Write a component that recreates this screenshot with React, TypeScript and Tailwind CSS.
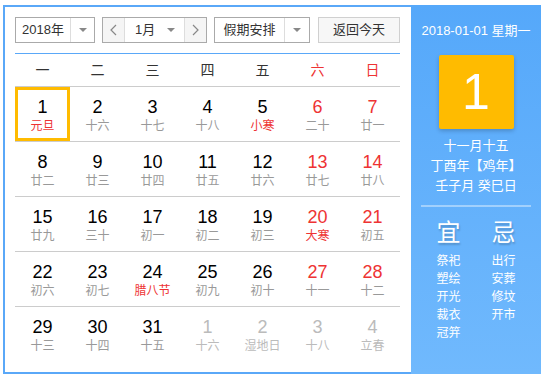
import React from 'react'

type Day = { n: number; l: string; red?: boolean; fest?: boolean; other?: boolean; sel?: boolean }

const weeks: Day[][] = [
  [
    { n: 1, l: '元旦', fest: true, sel: true },
    { n: 2, l: '十六' },
    { n: 3, l: '十七' },
    { n: 4, l: '十八' },
    { n: 5, l: '小寒', fest: true },
    { n: 6, l: '二十', red: true },
    { n: 7, l: '廿一', red: true },
  ],
  [
    { n: 8, l: '廿二' },
    { n: 9, l: '廿三' },
    { n: 10, l: '廿四' },
    { n: 11, l: '廿五' },
    { n: 12, l: '廿六' },
    { n: 13, l: '廿七', red: true },
    { n: 14, l: '廿八', red: true },
  ],
  [
    { n: 15, l: '廿九' },
    { n: 16, l: '三十' },
    { n: 17, l: '初一' },
    { n: 18, l: '初二' },
    { n: 19, l: '初三' },
    { n: 20, l: '大寒', red: true, fest: true },
    { n: 21, l: '初五', red: true },
  ],
  [
    { n: 22, l: '初六' },
    { n: 23, l: '初七' },
    { n: 24, l: '腊八节', fest: true },
    { n: 25, l: '初九' },
    { n: 26, l: '初十' },
    { n: 27, l: '十一', red: true },
    { n: 28, l: '十二', red: true },
  ],
  [
    { n: 29, l: '十三' },
    { n: 30, l: '十四' },
    { n: 31, l: '十五' },
    { n: 1, l: '十六', other: true },
    { n: 2, l: '湿地日', other: true },
    { n: 3, l: '十八', other: true },
    { n: 4, l: '立春', other: true },
  ],
]

const weekdays = ['一', '二', '三', '四', '五', '六', '日']
const yi = ['祭祀', '塑绘', '开光', '裁衣', '冠笄']
const ji = ['出行', '安葬', '修坟', '开市']

function Caret() {
  return <span className="block h-0 w-0 border-x-[4px] border-t-[4px] border-x-transparent border-t-[#888]" />
}

function Chevron({ dir }: { dir: 'l' | 'r' }) {
  return (
    <svg width="7" height="12" viewBox="0 0 7 12" className="text-[#888]">
      <polyline
        points={dir === 'l' ? '6,1 1,6 6,11' : '1,1 6,6 1,11'}
        fill="none"
        stroke="currentColor"
        strokeWidth="1.2"
      />
    </svg>
  )
}

export default function App() {
  return (
    <div
      className="ml-[3px] mt-[5px] flex h-[369px] w-[538px] text-[#333]"
      style={{ fontFamily: '"Liberation Sans", "Noto Sans CJK SC", sans-serif' }}
    >
      {/* calendar side */}
      <div className="flex w-[408px] flex-col border-y-2 border-l-2 border-[#5aa8f8] bg-white pl-[10px] pr-[11px] pt-[10px]">
        <div className="flex h-[26px] items-stretch text-[13px]">
          <div className="flex w-[80px] border border-[#aaa]">
            <div className="flex w-[55px] items-center justify-center border-r border-[#ddd]">2018年</div>
            <div className="flex flex-1 items-center justify-center"><Caret /></div>
          </div>
          <div className="ml-[7px] flex w-[105px] border border-[#aaa]">
            <div className="flex w-[22px] items-center justify-center border-r border-[#ddd] bg-[#f5f5f5]"><Chevron dir="l" /></div>
            <div className="flex w-[60px] items-center border-r border-[#ddd] pl-[10px]">
              <span>1月</span>
              <span className="ml-auto mr-[9px]"><Caret /></span>
            </div>
            <div className="flex flex-1 items-center justify-center bg-[#f5f5f5]"><Chevron dir="r" /></div>
          </div>
          <div className="ml-[7px] flex w-[96px] border border-[#aaa]">
            <div className="flex w-[70px] items-center justify-center border-r border-[#ddd]">假期安排</div>
            <div className="flex flex-1 items-center justify-center"><Caret /></div>
          </div>
          <div className="ml-[8px] flex w-[82px] items-center justify-center border border-[#d0d0d0] bg-[#f7f7f7]">返回今天</div>
        </div>

        <div className="mt-[10px] border-t border-[#5aa8f8]" />

        <div className="grid h-[33px] grid-cols-7 border-b border-[#ccc] text-[14px]">
          {weekdays.map((w, i) => (
            <div key={w} className={`flex items-center justify-center ${i > 4 ? 'text-[#e33]' : 'text-[#333]'}`}>
              {w}
            </div>
          ))}
        </div>

        {weeks.map((week, wi) => (
          <div key={wi} className={`grid h-[55px] grid-cols-7 ${wi < 4 ? 'border-b border-[#ccc]' : ''}`}>
            {week.map((d, di) => (
              <div
                key={di}
                className={`flex flex-col items-center pt-[10px] ${d.sel ? 'shadow-[inset_0_0_0_3px_#ffbb00]' : ''}`}
              >
                <span
                  className={`text-[18px] leading-[20px] ${
                    d.other ? 'text-[#bbb]' : d.red ? 'text-[#e33]' : 'text-black'
                  }`}
                >
                  {d.n}
                </span>
                <span
                  className={`text-[12px] leading-[18px] ${
                    d.other ? 'text-[#bbb]' : d.fest ? 'text-[#e33]' : 'text-[#999]'
                  }`}
                >
                  {d.l}
                </span>
              </div>
            ))}
          </div>
        ))}
      </div>

      {/* detail side */}
      <div className="flex w-[130px] flex-col items-center bg-gradient-to-b from-[#55a8fa] to-[#70b9fd] text-white">
        <div className="mt-[17px] text-[13px] leading-[18px]">2018-01-01 星期一</div>
        <div className="mt-[15px] flex h-[74px] w-[75px] items-center justify-center rounded-[2px] bg-[#ffbb00] text-[50px] leading-none shadow-[0_2px_4px_rgba(0,0,0,0.2)]">
          1
        </div>
        <div className="mt-[7px] flex flex-col items-center text-[13px] leading-[20px]">
          <span>十一月十五</span>
          <span>丁酉年【鸡年】</span>
          <span>壬子月 癸巳日</span>
        </div>
        <div className="mt-[9px] h-[2px] w-[110px] bg-white/40" />
        <div className="mt-[12px] flex w-[110px]">
          <div className="flex w-[55px] flex-col items-center">
            <span className="text-[24px] leading-[28px] [text-shadow:1px_2px_2px_rgba(0,0,0,0.2)]">宜</span>
            <div className="mt-[5px] flex flex-col items-center text-[12px] leading-[18px]">
              {yi.map((t) => (
                <span key={t}>{t}</span>
              ))}
            </div>
          </div>
          <div className="flex w-[55px] flex-col items-center">
            <span className="text-[24px] leading-[28px] [text-shadow:1px_2px_2px_rgba(0,0,0,0.2)]">忌</span>
            <div className="mt-[5px] flex flex-col items-center text-[12px] leading-[18px]">
              {ji.map((t) => (
                <span key={t}>{t}</span>
              ))}
            </div>
          </div>
        </div>
      </div>
    </div>
  )
}
